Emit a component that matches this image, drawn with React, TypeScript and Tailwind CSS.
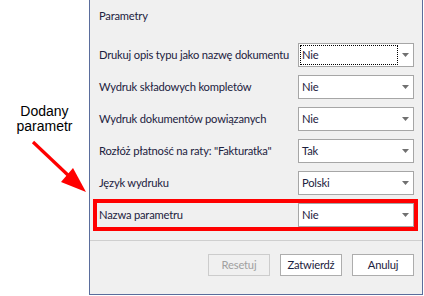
import { ReactNode } from 'react';

const uiFont = { fontFamily: '"Segoe UI", Lato, "Liberation Sans", sans-serif' };

function Combo({ value, focused }: { value: string; focused?: boolean }) {
  return (
    <div className="relative shrink-0 w-[116px] h-[24px] bg-white border border-[#a6a6a6] flex items-center pl-[3px] text-[#1c2240]">
      {focused && (
        <div className="absolute left-[1px] top-[1px] w-[98px] h-[20px] border border-dotted border-black" />
      )}
      <span className="leading-none">{value}</span>
      <svg className="absolute right-[4px] top-[9px]" width="7" height="4" viewBox="0 0 7 4">
        <polygon points="0,0 7,0 3.5,4" fill="#707070" />
      </svg>
    </div>
  );
}

function Row({ label, children }: { label: string; children: ReactNode }) {
  return (
    <div className="flex items-center justify-between h-[24px] pl-[9px] pr-[8px]">
      <span className="text-[#1c2240] whitespace-nowrap">{label}</span>
      {children}
    </div>
  );
}

export default function App() {
  const rows = [
    { label: 'Drukuj opis typu jako nazwę dokumentu', value: 'Nie', focused: true },
    { label: 'Wydruk składowych kompletów', value: 'Nie' },
    { label: 'Wydruk dokumentów powiązanych', value: 'Nie' },
    { label: 'Rozłóż płatność na raty: "Fakturatka"', value: 'Tak' },
    { label: 'Język wydruku', value: 'Polski' },
  ];

  return (
    <div className="w-[424px] h-[296px] bg-white flex overflow-hidden">
      {/* annotation */}
      <div className="w-[89px] shrink-0 flex flex-col items-center pt-[104px]" style={{ fontFamily: '"Liberation Sans", Arial, sans-serif' }}>
        <p className="text-[14px] leading-[15px] text-black text-center">
          Dodany
          <br />
          parametr
        </p>
        <svg className="mt-[4px] self-start" width="89" height="58" viewBox="0 138 89 58">
          <line x1="33" y1="142" x2="70" y2="177" stroke="#ff0000" strokeWidth="3.2" />
          <polygon points="61,182 73,168 86,192" fill="#ff0000" />
        </svg>
      </div>

      {/* dialog */}
      <div
        className="w-[334px] shrink-0 h-[295px] bg-[#f0f0f0] border-x border-b border-[#5a6d9c] flex flex-col text-[11.2px] tracking-[-0.2px]"
        style={uiFont}
      >
        <div className="pt-[8px] pl-[9px] h-[24px] leading-[16px] text-[#1c2240]">Parametry</div>

        <div className="mt-[19px] flex flex-col gap-[8px]">
          {rows.map((r) => (
            <Row key={r.label} label={r.label}>
              <Combo value={r.value} focused={r.focused} />
            </Row>
          ))}
          <div className="relative">
            <Row label="Nazwa parametru">
              <Combo value="Nie" />
            </Row>
            <div className="absolute left-[3px] right-[4px] top-[-4px] bottom-[-4px] border-4 border-[#ff0000]" />
          </div>
        </div>

        <div className="mt-[13px] h-px bg-[#cfcfcf]" />

        <div className="mt-[13px] flex justify-end gap-[10px] pr-[8px]">
          <button className="w-[62px] h-[22px] border border-[#cccccc] bg-[#f0f0f0] text-[#a0a0a0]">Resetuj</button>
          <button className="w-[62px] h-[22px] border border-[#adadad] bg-white text-[#1c2240]">Zatwierdź</button>
          <button className="w-[62px] h-[22px] border border-[#adadad] bg-white text-[#1c2240]">Anuluj</button>
        </div>
      </div>
    </div>
  );
}
